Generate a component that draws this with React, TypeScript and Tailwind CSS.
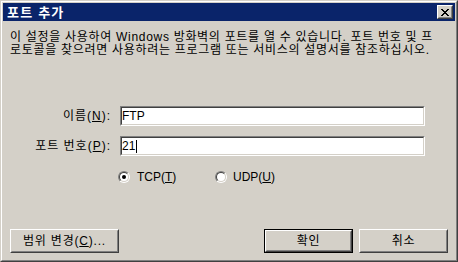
import React from "react";

const font = { fontFamily: '"Liberation Sans", "Noto Sans CJK KR", sans-serif' };

function Radio({ checked }: { checked?: boolean }) {
  return (
    <div className="w-[12px] h-[12px] rounded-full border border-t-[#808080] border-l-[#808080] border-b-white border-r-white">
      <div className="w-full h-full rounded-full border border-t-[#404040] border-l-[#404040] border-b-[#d4d0c8] border-r-[#d4d0c8] bg-white flex items-center justify-center">
        {checked && <div className="w-[4px] h-[4px] rounded-full bg-black" />}
      </div>
    </div>
  );
}

function Input({ children }: { children: React.ReactNode }) {
  return (
    <div className="w-[305px] h-[20px] border border-t-[#808080] border-l-[#808080] border-b-white border-r-white">
      <div className="w-full h-full border border-t-[#404040] border-l-[#404040] border-b-[#d4d0c8] border-r-[#d4d0c8] bg-white flex items-center text-[12px] leading-none text-black">
        {children}
      </div>
    </div>
  );
}

function Button({ children, w, def }: { children: React.ReactNode; w: string; def?: boolean }) {
  const inner = (
    <div className="w-full h-full border border-t-white border-l-white border-b-[#404040] border-r-[#404040]">
      <div className="w-full h-full border border-t-[#d4d0c8] border-l-[#d4d0c8] border-b-[#808080] border-r-[#808080] flex items-center justify-center text-[12px] leading-none text-black tracking-[0.8px]">
        {children}
      </div>
    </div>
  );
  return (
    <div className={`${w} h-[24px] ${def ? "border border-black" : ""}`}>{inner}</div>
  );
}

export default function App() {
  return (
    <div style={font} className="w-[458px] h-[262px] bg-[#d4d0c8] border border-t-[#d4d0c8] border-l-[#d4d0c8] border-b-[#404040] border-r-[#404040]">
      <div className="w-full h-full border border-t-white border-l-white border-b-[#808080] border-r-[#808080] p-[1px] flex flex-col">
        <div className="h-[18px] bg-[#0a246a] flex items-center justify-between pl-[4px] pr-[2px]">
          <span className="text-white font-bold text-[13px] leading-none tracking-[1.2px]">포트 추가</span>
          <div className="w-[16px] h-[14px] border border-t-white border-l-white border-b-[#404040] border-r-[#404040] bg-[#d4d0c8]">
            <div className="w-full h-full border border-t-[#d4d0c8] border-l-[#d4d0c8] border-b-[#808080] border-r-[#808080] flex items-center justify-center">
              <svg width="8" height="7" viewBox="0 0 8 7" shapeRendering="crispEdges">
                <path d="M0 0h2v1H0zM6 0h2v1H6zM1 1h2v1H1zM5 1h2v1H5zM2 2h4v1H2zM3 3h2v1H3zM2 4h4v1H2zM1 5h2v1H1zM5 5h2v1H5zM0 6h2v1H0zM6 6h2v1H6z" fill="#000" />
              </svg>
            </div>
          </div>
        </div>
        <div className="flex-1 flex flex-col px-[7px] pt-[10px]">
          <p className="text-[12px] leading-[13px] text-black tracking-[0.7px] whitespace-nowrap">
            이 설정을 사용하여 Windows 방화벽의 포트를 열 수 있습니다. 포트 번호 및 프
            <br />
            로토콜을 찾으려면 사용하려는 프로그램 또는 서비스의 설명서를 참조하십시오.
          </p>
          <div className="mt-[49px] flex items-center">
            <div className="w-[101px] text-right text-[12px] leading-none text-black tracking-[1px] whitespace-nowrap">
              이름(<span className="underline">N</span>):
            </div>
            <div className="ml-[9px]">
              <Input>FTP</Input>
            </div>
          </div>
          <div className="mt-[10px] flex items-center">
            <div className="w-[101px] text-right text-[12px] leading-none text-black tracking-[1px] whitespace-nowrap">
              포트 번호(<span className="underline">P</span>):
            </div>
            <div className="ml-[9px]">
              <Input>
                21<span className="inline-block w-[1px] h-[13px] bg-black ml-[1px]" />
              </Input>
            </div>
          </div>
          <div className="mt-[13px] flex items-center h-[16px] pl-[108px]">
            <Radio checked />
            <span className="ml-[7px] text-[12px] leading-none text-black w-[80px]">
              TCP(<span className="underline">T</span>)
            </span>
            <div className="ml-[-2px]">
              <Radio />
            </div>
            <span className="ml-[6px] text-[12px] leading-none text-black">
              UDP(<span className="underline">U</span>)
            </span>
          </div>
          <div className="mt-[44px] flex items-center">
            <Button w="w-[109px]">
              범위 변경(<span className="underline">C</span>)...
            </Button>
            <div className="flex-1" />
            <Button w="w-[89px]" def>
              확인
            </Button>
            <div className="w-[6px]" />
            <Button w="w-[89px]">취소</Button>
          </div>
        </div>
      </div>
    </div>
  );
}
